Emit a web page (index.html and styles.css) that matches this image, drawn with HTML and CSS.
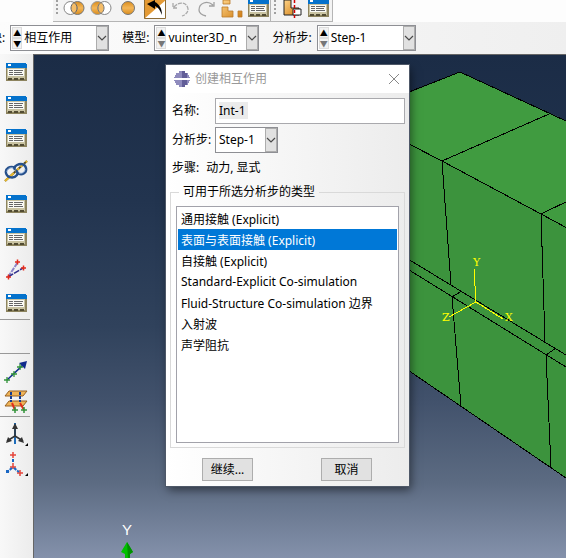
FILE: index.html
```html
<!DOCTYPE html>
<html lang="zh-CN">
<head>
<meta charset="utf-8">
<title>创建相互作用</title>
<link rel="stylesheet" href="styles.css">
</head>
<body>
<svg class="defs" width="0" height="0" aria-hidden="true">
  <defs>
    <linearGradient id="gold" x1="0" y1="0" x2="1" y2="1"><stop offset="0" stop-color="#ffd489"/><stop offset="1" stop-color="#cf7c12"/></linearGradient>
    <linearGradient id="goldv" x1="0" y1="0" x2="0" y2="1"><stop offset="0" stop-color="#d98c1c"/><stop offset=".5" stop-color="#f3b658"/><stop offset="1" stop-color="#d98c1c"/></linearGradient>
    <symbol id="manager" viewBox="0 0 21 18">
      <path d="M0 0h20v1h1v4H0z" fill="#0472cc"/><path d="M2 1h3v2H2z" fill="#fff"/>
      <path d="M0 5h21v13H0z" fill="#8d845f"/><path d="M1 5h18v11H1z" fill="#c9c3a2"/>
      <path d="M2 6h16v7H2z" fill="#fbfbf6"/>
      <path d="M3 7.500h4M3 9.500h4M3 11.500h4M8 7.500h9M8 9.500h8M8 11.500h9" stroke="#666" stroke-width="1"/>
      <path d="M2 15h4v2H2zM8 15h4v2H8zM14 15h4v2h-4z" fill="#514b32"/>
    </symbol>
    <symbol id="chevron" viewBox="0 0 10 6"><path d="M1 1l4 4 4-4" fill="none" stroke="#4a4a4a" stroke-width="1.200"/></symbol>
  </defs>
</svg>
<div class="app">
  <header class="toolbar">
    <div class="toolgroup">
      <i class="grip"></i>
      <button class="tool" aria-label="合并"><svg width="22" height="16" viewBox="0 0 22 16"><circle cx="14.500" cy="8" r="6.500" fill="url(#goldv)" stroke="#777"/><circle cx="7.500" cy="8" r="6.500" fill="#fff" stroke="#888"/><path d="M11 2.500a6.500 6.500 0 0 1 0 11a6.500 6.500 0 0 1 0-11" fill="#f5bd68" stroke="#666"/></svg></button>
      <button class="tool" aria-label="切割"><svg width="22" height="16" viewBox="0 0 22 16"><circle cx="7.500" cy="8" r="6.500" fill="url(#goldv)" stroke="#999"/><circle cx="14.500" cy="8" r="6.500" fill="#fff" stroke="#888"/><path d="M11 2.500a6.500 6.500 0 0 1 0 11a6.500 6.500 0 0 1 0-11" fill="#f5bd68" stroke="#777"/></svg></button>
      <button class="tool round" aria-label="圆"><svg width="16" height="16" viewBox="0 0 16 16"><circle cx="8" cy="8" r="6.500" fill="url(#goldv)" stroke="#777"/></svg></button>
      <button class="tool" aria-label="选择"><svg width="22" height="19" viewBox="0 0 22 19"><path d="M0 0h22v19H0z" fill="#fff"/><path d="M0 0h22L0 19z" fill="#e49a34"/><path d="M.5 0v18.500h21V0" fill="none" stroke="#8b6b36"/><path d="M3 4l8-4v2c4 2 7 6 7 13-2-5-4-8-7-9v3z" fill="#000"/></svg></button>
      <button class="tool" aria-label="撤销"><svg width="20" height="18" viewBox="0 0 20 18"><path d="M2 3v5h5M3 7C8 1 16 2 17 9c0 4-3 6-6 7" fill="none" stroke="#a9a9a9" stroke-width="1.300" stroke-dasharray="4 1"/></svg></button>
      <button class="tool" aria-label="重做"><svg width="20" height="18" viewBox="0 0 20 18"><path d="M18 2v4h-5M17 5C11 0 3 3 3 10c0 3 3 5 7 6" fill="none" stroke="#a0a0a0" stroke-width="1.300"/></svg></button>
      <button class="tool" aria-label="部件"><svg width="22" height="18" viewBox="0 0 22 18"><path d="M1 7h6v4h5v6H1zM2 0h7v4H2zM17 11h4v6h-4z" fill="url(#gold)" stroke="#b9792a" stroke-width=".8"/></svg></button>
      <button class="tool manager" aria-label="管理器"><svg width="21" height="18"><use href="#manager"/></svg></button>
      <i class="divider"></i><i class="grip"></i>
      <button class="tool" aria-label="对齐"><svg width="22" height="20" viewBox="0 0 22 20"><path d="M3 0h7v8h8v7H3z" fill="url(#gold)" stroke="#222"/><path d="M12 9h8v6h-8z" fill="#fff" stroke="#222"/><path d="M13.500 0v20" stroke="#d00000" stroke-width="1.500" stroke-dasharray="3 2"/></svg></button>
      <button class="tool manager" aria-label="视图管理器"><svg width="21" height="18"><use href="#manager"/></svg></button>
    </div>
  </header>

  <div class="context">
    <label class="ctx-label first" for="module">模块:</label>
    <div class="combo wide"><span class="spin"><button aria-label="上一个">▲</button><button aria-label="下一个">▼</button></span><select id="module"><option>相互作用</option></select><span class="arrow"><svg width="10" height="6"><use href="#chevron"/></svg></span></div>
    <label class="ctx-label" for="model">模型:</label>
    <div class="combo wider"><span class="spin off"><button aria-label="上一个">▲</button><button aria-label="下一个">▼</button></span><select id="model"><option>vuinter3D_n</option></select><span class="arrow"><svg width="10" height="6"><use href="#chevron"/></svg></span></div>
    <label class="ctx-label" for="step">分析步:</label>
    <div class="combo wide"><span class="spin off"><button aria-label="上一个">▲</button><button aria-label="下一个">▼</button></span><select id="step"><option>Step-1</option></select><span class="arrow"><svg width="10" height="6"><use href="#chevron"/></svg></span></div>
  </div>

  <main class="work">
    <nav class="sidebar" aria-label="工具箱">
      <button class="side" aria-label="管理器 1"><svg width="21" height="18"><use href="#manager"/></svg></button>
      <button class="side" aria-label="管理器 2"><svg width="21" height="18"><use href="#manager"/></svg></button>
      <button class="side" aria-label="管理器 3"><svg width="21" height="18"><use href="#manager"/></svg></button>
      <button class="side" aria-label="查找接触对"><svg width="24" height="24" viewBox="0 0 24 24"><path d="M1 22L23 2" stroke="#4d4630" stroke-width="2"/><path d="M1 22L23 2" stroke="#e8b92c" stroke-width="2" stroke-dasharray="5 2"/><g fill="none" stroke="#26508c" stroke-width="2.400"><path d="M11 9C6 6 1 10 2 14c1 5 8 6 11 2 1-2 1-3-1-5"/><path d="M13 14c5 3 10 0 9-5-1-4-5-5-9-3-2 1-3 3-2 5"/></g><path d="M9 9c-4-1-6 2-6 4M15 14c4 1 6-2 6-4" fill="none" stroke="#a8c4e8"/></svg></button>
      <button class="side" aria-label="管理器 4"><svg width="21" height="18"><use href="#manager"/></svg></button>
      <button class="side" aria-label="管理器 5"><svg width="21" height="18"><use href="#manager"/></svg></button>
      <button class="side" aria-label="连接点"><svg width="22" height="22" viewBox="0 0 22 22"><path d="M3 18L13 3" stroke="#8c86c9" stroke-width="2" stroke-dasharray="5 1"/><path d="M3 18L18 9" stroke="#302f8c" stroke-width="1.600" stroke-dasharray="6 1"/><path d="M1 18h5M3.500 15.500v5M10 3h5M12.500 .5v5M16 9h5M18.500 6.500v5" stroke="#e32a1b" stroke-width="1.500"/></svg></button>
      <button class="side" aria-label="管理器 6"><svg width="21" height="18"><use href="#manager"/></svg></button>
      <div class="blank"></div>
      <div class="section">
        <button class="side" aria-label="连接线"><svg width="24" height="24" viewBox="0 0 24 24"><path d="M3 20L19 5" stroke="#102b8c" stroke-width="1.600"/><path d="M23 1l-2 8-6-6z" fill="#102b8c"/><path d="M0 20h6M3 17v6M7 14h6M10 11v6M13 7h6M16 4v6" stroke="#33943b" stroke-width="1.300"/></svg></button>
        <button class="side short" aria-label="紧固件"><svg width="24" height="24" viewBox="0 0 24 24"><path d="M5 1h18l-4 5H1zM5 11h18l-4 5H1z" fill="#f0b559" stroke="#976122"/><path d="M7 2v10M16 2v10" stroke="#123c91" stroke-width="2" stroke-dasharray="3 1"/><path d="M8 13l3 7M16 13l4 7" stroke="#e02e1b" stroke-width="2"/><path d="M8 20h6M11 17v6M17 20h6M20 17v6" stroke="#33943b" stroke-width="1.500"/></svg></button>
      </div>
      <div class="section last">
        <button class="side axes" aria-label="坐标系"><svg width="24" height="24" viewBox="0 0 24 24"><path d="M11 22V1" stroke="#1f6dbb" stroke-width="2"/><path d="M11 14V5M11 14L3 19M11 14l8 5" stroke="#333" stroke-width="1.500"/><path d="M11 1l3 6H8zM2 21l2-6 4 4zM20 21l-6-2 4-4z" fill="#333"/><path d="M24 21v3h-3z" fill="#000"/></svg></button>
        <button class="side short" aria-label="基准点"><svg width="24" height="24" viewBox="0 0 24 24"><path d="M9 0v6M6 3h6M9 11v6M6 15h6M13 21h6M16 18v6" stroke="#e5443a" stroke-width="1.500"/><path d="M9 7v4M8 16l-5 4M10 16l5 4" stroke="#1967c4" stroke-width="2" stroke-dasharray="3 1"/><path d="M2 18h3v3H2z" fill="#1967c4"/><path d="M24 21v3h-3z" fill="#000"/></svg></button>
      </div>
    </nav>

    <section class="viewport">
      <svg class="scene" viewBox="34 55 532 503" preserveAspectRatio="xMinYMin slice" role="img" aria-label="模型视图">
        <path d="M340 121L460 72L630 150V522L340 324z" fill="#3c933d"/>
        <path d="M340 121L460 72L630 150V262L541 214L442 161L340 108z" fill="#409b40"/>
        <g fill="none" stroke="#000" shape-rendering="crispEdges">
          <path d="M340 119L460 72L566 121L630 151M409 144L442 161L541 214L630 262M549 114L442 161L451 285M630 171L541 214L545 342"/>
          <path d="M380 242L566 355L630 394M380 252L566 367L630 407M462 291L452 297L461 406M556 348L546 355L551 467M380 351L566 478L630 522"/>
        </g>
        <path d="M474 269L476 302L503 319M476 302L449 317" fill="none" stroke="#ff0" shape-rendering="crispEdges"/>
        <g class="axis-names"><text x="473" y="266">Y</text><text x="505" y="321">X</text><text x="442" y="321">Z</text></g>
        <text class="triad-name" x="122" y="535">Y</text>
        <path d="M127 542l6 10-3 2v5h-5v-5l-4-2z" fill="#00c000"/><path d="M127 542l6 10-3 2v5h-2z" fill="#008f00"/>
      </svg>

      <form class="dialog" role="dialog" aria-labelledby="title">
        <div class="titlebar">
          <svg width="16" height="16" viewBox="0 0 16 16"><path d="M5 0h6v2h3v2h1v2h1v1H0V6h1V4h1V2h3zM0 9h16v1h-1v2h-1v2h-3v2H5v-2H2v-2H1v-2H0z" fill="#8f8bbd"/><path d="M8 0h3v2h2v5H8zM8 9h5v5h-2v2H8z" fill="#625e98"/></svg>
          <h1 id="title">创建相互作用</h1>
          <button type="button" class="close" aria-label="关闭"><svg width="12" height="12" viewBox="0 0 12 12"><path d="M1 1l10 10M11 1L1 11" stroke="#888" fill="none"/></svg></button>
        </div>
        <div class="body">
          <div class="row"><label for="name">名称:</label><div class="field"><input id="name" value="Int-1" size="2"></div></div>
          <div class="row"><label for="dstep">分析步:</label><div class="combo small"><select id="dstep"><option>Step-1</option></select><span class="arrow"><svg width="10" height="6"><use href="#chevron"/></svg></span></div></div>
          <p class="procedure"><span>步骤:</span><span>动力, 显式</span></p>
          <fieldset>
            <legend><label for="types">可用于所选分析步的类型</label></legend>
            <select id="types" class="types" size="7">
              <option>通用接触 (Explicit)</option>
              <option selected>表面与表面接触 (Explicit)</option>
              <option>自接触 (Explicit)</option>
              <option>Standard-Explicit Co-simulation</option>
              <option>Fluid-Structure Co-simulation 边界</option>
              <option>入射波</option>
              <option>声学阻抗</option>
            </select>
          </fieldset>
          <div class="actions"><button type="button">继续...</button><button type="button">取消</button></div>
        </div>
      </form>
    </section>
  </main>
</div>
</body>
</html>
```
FILE: styles.css
```css
* { box-sizing: border-box; }
body { margin: 0; }
body, button, input, select {
  font-family: "Noto Sans", "Noto Sans CJK SC", sans-serif;
  font-size: 12px;
  line-height: 16px;
  color: #000;
}
button, input, select { margin: 0; padding: 0; border: 0; border-radius: 0; background: none; outline: 0; }
svg { display: block; flex: none; }
.defs { position: absolute; }
.app { display: flex; flex-direction: column; height: 100vh; overflow: hidden; background: #f1f1f1; }

.toolbar { display: flex; height: 22px; flex: none; padding-left: 53px; background: #fdfdfd; }
.toolgroup { display: flex; gap: 5px; padding: 0 3px 2px 3px; background: #f3f3f3; border-right: 1px solid #b5b5b5; border-bottom: 1px solid #b5b5b5; overflow: hidden; }
.tool { display: flex; align-items: flex-start; }
.tool.round { padding: 0 3px; }
.tool.manager { margin-top: -1px; }
.grip { width: 2px; height: 14px; background: repeating-linear-gradient(#a0a0a0 0 2px, transparent 2px 4px); }
.divider { width: 1px; height: 22px; margin: 0 -2px 0 -4px; background: #b5b5b5; }

.context { display: flex; align-items: center; height: 32px; flex: none; background: linear-gradient(90deg, #fcfcfc, #efefef); overflow: hidden; }
.ctx-label { flex: none; padding: 0 5px 0 13px; white-space: nowrap; }
.ctx-label.first { margin-left: -22px; padding: 0 5px 0 0; }
.combo { display: flex; flex: none; position: relative; height: 26px; padding: 1px; border: 1px solid #8e8f94; background: #fff; }
.wide { width: 99px; }
.wider { width: 105px; }
.combo select { flex: 1; min-width: 0; appearance: none; padding-left: 2px; }
.combo .arrow { position: absolute; top: 0; right: 0; bottom: 0; display: flex; align-items: center; justify-content: center; width: 12px; background: #e1e1e1; border: 1px solid #adadad; pointer-events: none; }
.spin { display: flex; flex-direction: column; justify-content: center; width: 10px; }
.spin button { flex: 1; width: 10px; font-size: 8px; line-height: 8px; border: 1px solid #ddd; background: #f2f2f2; }
.spin.off button:last-child { color: #777; }

.work { display: flex; flex: 1; min-height: 0; }
.sidebar { flex: none; width: 34px; padding-top: 1px; border-right: 1px solid #666; background: linear-gradient(90deg, #f8f8f8, #ececec); overflow: hidden; }
.side { display: flex; align-items: center; justify-content: center; width: 32px; height: 33px; }
.side.short { height: 28px; }
.side.axes { height: 32px; }
.blank { height: 35px; margin-right: 3px; border-top: 1px solid #999; border-bottom: 1px solid #999; }
.section { padding-top: 1px; margin-right: 3px; border-bottom: 1px solid #999; }
.section.last { border-bottom: 0; }

.viewport { position: relative; flex: 1; min-width: 0; border-top: 1px solid #666; background: linear-gradient(#1b2c46, #22344f 29%, #30425c 54%, #42526c 69%, #5c6b82 85%, #8491ab); }
.scene { width: 100%; height: 100%; }
.axis-names { font: 11px "DejaVu Serif", serif; fill: #ff0; }
.triad-name { font: 15px "Liberation Sans", sans-serif; fill: #fff; }

.dialog { position: absolute; left: 132px; top: 10px; display: flex; flex-direction: column; width: 243px; background: #fff; box-shadow: 0 0 0 1px #4e5868, 2px 4px 9px rgba(0, 0, 0, .5); }
.titlebar { display: flex; align-items: center; height: 28px; padding: 0 9px 0 8px; gap: 5px; }
.titlebar h1 { flex: 1; margin: 0; font-size: 12px; font-weight: 400; line-height: 16px; color: #999; }
.body { padding: 3px 4px 4px; background: linear-gradient(90deg, #fff, #ececec); }
.row { display: flex; align-items: center; height: 29px; padding-left: 2px; }
.row label { width: 43px; flex: none; white-space: nowrap; }
.field { display: flex; align-items: center; flex: 1; height: 26px; padding: 0 3px; border: 1px solid #a9a9ad; background: #fff; }
.field input { width: 29px; height: 17px; background: #ebebeb; }
.small { width: 63px; }
.procedure { display: flex; gap: 7px; height: 30px; margin: 0; padding: 6px 2px; }
fieldset { min-width: 0; margin: 0; padding: 6px 5px 4px; border: 1px solid #d9d9d9; }
legend { margin-left: 3px; padding: 0 4px; line-height: 16px; }
.types { display: block; width: 100%; height: 237px; padding: 1px; border: 1px solid #a2a2aa; background: #fff; overflow: hidden; }
.types option { height: 21px; min-height: 21px; padding: 2px 3px; line-height: 17px; color: #000; }
.types option:checked { color: #fff; background: #0078d7 linear-gradient(#0078d7, #0078d7); }
.actions { display: flex; justify-content: space-between; padding: 10px 33px 1px 32px; }
.actions button { width: 51px; height: 23px; border: 1px solid #adadad; background: #e1e1e1; }
```
